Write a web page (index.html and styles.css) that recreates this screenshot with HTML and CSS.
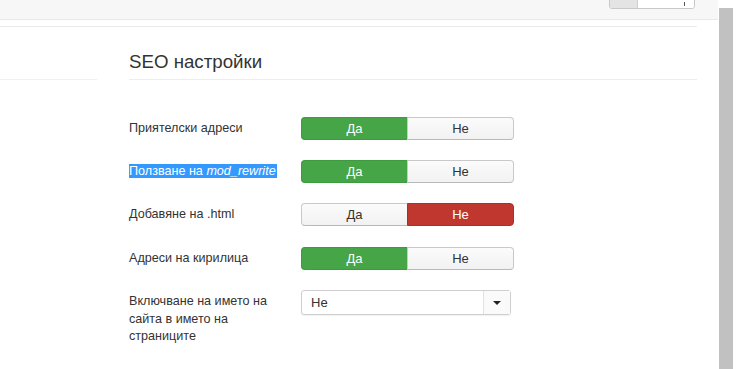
FILE: index.html
```html
<!DOCTYPE html>
<html lang="bg">
<head>
<meta charset="utf-8">
<title>SEO настройки</title>
<link rel="stylesheet" href="styles.css">
</head>
<body>
<div class="page">
  <div class="main">
    <div class="topbar">
      <div class="top-group">
        <span class="top-btn-left"></span>
        <span class="top-btn-right"><span class="top-caret"></span></span>
      </div>
    </div>
    <div class="rule"></div>
    <div class="layout">
      <div class="sidebar"></div>
      <div class="content">
        <h2 class="legend">SEO настройки</h2>
        <div class="row">
          <div class="label">Приятелски адреси</div>
          <div class="toggle">
            <span class="tbtn on-yes">Да</span>
            <span class="tbtn">Не</span>
          </div>
        </div>
        <div class="row">
          <div class="label"><span class="sel">Ползване на <em>mod_rewrite</em></span></div>
          <div class="toggle">
            <span class="tbtn on-yes">Да</span>
            <span class="tbtn">Не</span>
          </div>
        </div>
        <div class="row">
          <div class="label">Добавяне на .html</div>
          <div class="toggle">
            <span class="tbtn">Да</span>
            <span class="tbtn on-no">Не</span>
          </div>
        </div>
        <div class="row">
          <div class="label">Адреси на кирилица</div>
          <div class="toggle">
            <span class="tbtn on-yes">Да</span>
            <span class="tbtn">Не</span>
          </div>
        </div>
        <div class="row">
          <div class="label">Включване на името на сайта в името на страниците</div>
          <div class="select">
            <span class="select-value">Не</span>
            <span class="select-arrow"><span class="tri"></span></span>
          </div>
        </div>
      </div>
    </div>
  </div>
  <div class="scrollbar"><div class="thumb"></div></div>
</div>
</body>
</html>
```

FILE: styles.css
```css
html, body {
  margin: 0;
  padding: 0;
  background: #fff;
  overflow: hidden;
}
body {
  font-family: "Liberation Sans", Arial, Helvetica, sans-serif;
  font-size: 13px;
  color: #333;
}
.page {
  display: flex;
  width: 736px;
  height: 369px;
  overflow: hidden;
}
.main {
  width: 718px;
  flex: none;
}
.topbar {
  height: 19px;
  background: #f7f7f7;
  border-bottom: 1px solid #e9e9e9;
  display: flex;
  justify-content: flex-end;
  padding-right: 23px;
}
.top-group {
  display: flex;
  height: 20px;
  margin-top: -13px;
  border: 1px solid #c8c8c8;
  border-radius: 0 0 3px 3px;
  overflow: hidden;
}
.top-btn-left {
  width: 27px;
  background: #e4e4e4;
  border-right: 1px solid #cfcfcf;
}
.top-btn-right {
  width: 56px;
  background: #fff;
  position: relative;
}
.top-caret {
  position: absolute;
  right: 9px;
  bottom: 2px;
  width: 1px;
  height: 4px;
  background: #555;
}
.rule {
  width: 697px;
  height: 0;
  margin-top: 6px;
  border-top: 1px solid #ececec;
}
.layout {
  display: flex;
}
.sidebar {
  width: 97px;
  height: 52px;
  border-bottom: 1px solid #f0f0f0;
  flex: none;
}
.content {
  margin-left: 32px;
  width: 568px;
}
.legend {
  margin: 0;
  padding-top: 25px;
  height: 27px;
  font-size: 18.7px;
  font-weight: normal;
  line-height: 20px;
  color: #333;
  border-bottom: 1px solid #ededed;
  margin-bottom: 37px;
}
.row {
  display: flex;
  align-items: flex-start;
  margin-bottom: 20px;
}
.row:nth-child(4) {
  margin-bottom: 21px;
}
.label {
  width: 160px;
  margin-right: 12px;
  padding-top: 3px;
  font-size: 12.6px;
  line-height: 17.5px;
  flex: none;
}
.sel {
  background: #3399ff;
  color: #fff;
  padding: 0 1px 0 0;
}
.toggle {
  display: flex;
  width: 213px;
  height: 23px;
}
.tbtn {
  flex: 1;
  display: flex;
  align-items: center;
  justify-content: center;
  background: linear-gradient(#fbfbfb, #f2f2f2);
  border: 1px solid #c9c9c9;
  border-bottom-color: #b8b8b8;
  color: #333;
  font-size: 13px;
}
.tbtn:first-child {
  border-radius: 4px 0 0 4px;
  border-right: none;
}
.tbtn:last-child {
  border-radius: 0 4px 4px 0;
}
.tbtn.on-yes {
  background: #46a546;
  border-color: #3f9a3f;
  color: #fff;
}
.tbtn.on-no {
  background: #c0372f;
  border-color: #a9302a;
  color: #fff;
}
.select {
  display: flex;
  width: 208px;
  height: 23px;
  border: 1px solid #cfcfcf;
  border-radius: 3px;
  box-shadow: 0 1px 1px rgba(0,0,0,0.06);
  background: #fff;
}
.select-value {
  flex: 1;
  padding-left: 9px;
  line-height: 23px;
}
.select-arrow {
  width: 26px;
  border-left: 1px solid #e2e2e2;
  background: #fafafa;
  display: flex;
  align-items: center;
  justify-content: center;
}
.tri {
  width: 0;
  height: 0;
  border-left: 4px solid transparent;
  border-right: 4px solid transparent;
  border-top: 4px solid #222;
}
.scrollbar {
  width: 18px;
  flex: none;
  padding-top: 8px;
  background: #fff;
}
.thumb {
  width: 14px;
  margin-left: 1px;
  height: 400px;
  background: #c1c1c1;
}
```
